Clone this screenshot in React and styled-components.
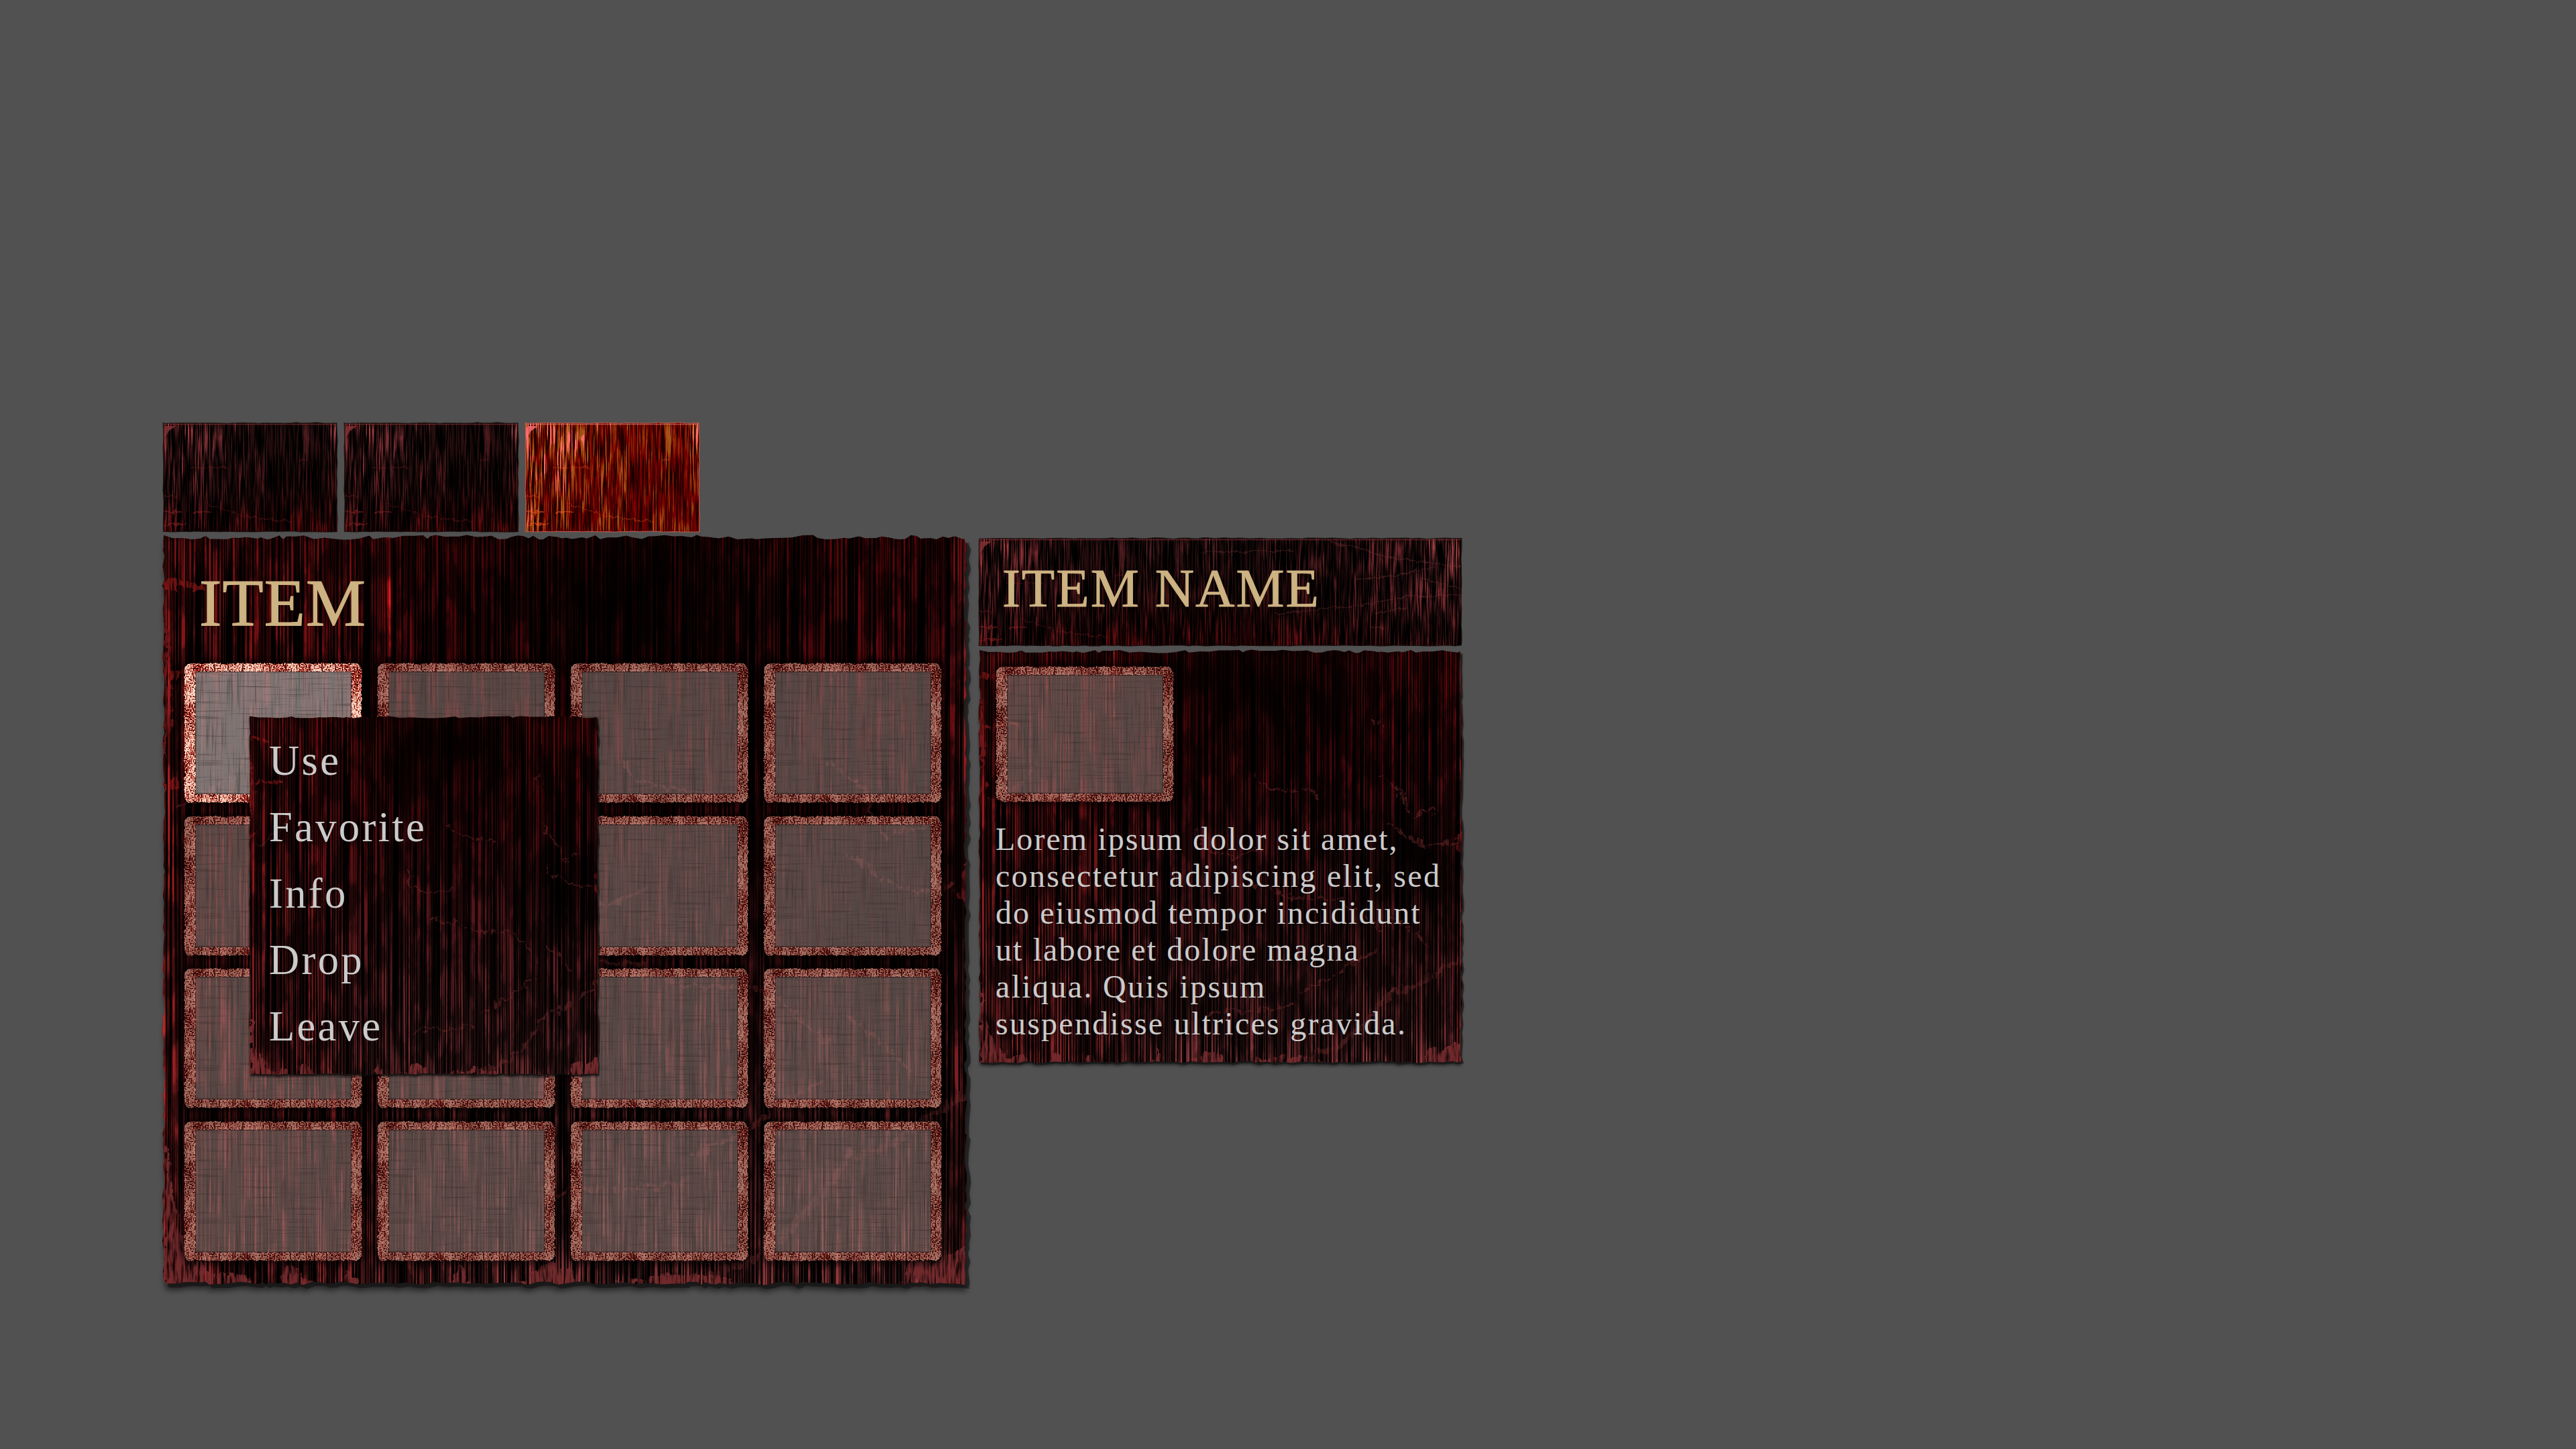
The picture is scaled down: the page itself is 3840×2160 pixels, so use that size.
import React from "react";
import styled, { createGlobalStyle } from "styled-components";

const serif = `"Liberation Serif", "Times New Roman", serif`;

const Global = createGlobalStyle`
  html, body { margin: 0; background: #515151; }
  body { font-family: ${serif}; overflow: hidden; }
  *, *::before, *::after { box-sizing: border-box; }
`;

/* ---------- texture helpers ---------- */

function random(seed) {
  let s = seed * 7919 + 13;
  return () => {
    s = (s * 16807) % 2147483647;
    return s / 2147483647;
  };
}

function raggedOutline(w, h, amp, seed) {
  const r = random(seed);
  const pts = [];
  const walk = (len, place) => {
    let p = 0;
    while (p < len) {
      pts.push(place(p, (r() - 0.5) * 2 * amp));
      p += 4 + r() * 13;
    }
  };
  walk(w, (p, o) => [p, o]);
  walk(h, (p, o) => [w + o * 0.7, p]);
  walk(w, (p, o) => [w - p, h + o * 0.7]);
  walk(h, (p, o) => [o * 0.6, h - p]);
  return "M" + pts.map(([x, y]) => `${x.toFixed(1)} ${y.toFixed(1)}`).join("L") + "Z";
}

const scaled = (points, w, h) =>
  "M" + points.map(([x, y]) => `${(x * w).toFixed(1)} ${(y * h).toFixed(1)}`).join("L");

const CRACKS = [
  [[0.57, 0.3], [0.59, 0.325], [0.65, 0.34], [0.7, 0.348]],
  [[0.81, 0.168], [0.835, 0.168], [0.835, 0.2]],
  [[0.83, 0.3], [0.87, 0.335], [0.89, 0.38], [0.9, 0.4], [0.95, 0.387]],
  [[0.45, 0.43], [0.46, 0.47], [0.5, 0.495], [0.53, 0.5], [0.6, 0.475]],
  [[0.52, 0.565], [0.6, 0.575], [0.65, 0.6], [0.75, 0.605], [0.79, 0.64], [0.83, 0.68]],
  [[0.85, 0.64], [0.9, 0.68], [0.93, 0.715]],
  [[0.66, 0.83], [0.72, 0.8], [0.78, 0.755], [0.82, 0.73]],
  [[0.47, 0.89], [0.51, 0.873], [0.57, 0.875], [0.65, 0.865]],
  [[0.85, 0.42], [0.9, 0.46], [0.94, 0.475], [1, 0.462]],
  [[0.02, 0.36], [0.09, 0.32], [0.12, 0.26]],
];

const FOLDS = [
  [[1, 0.745], [0.94, 0.79], [0.9, 0.82], [0.85, 0.83]],
  [[0.86, 0.82], [0.82, 0.88], [0.78, 0.93], [0.74, 0.965], [0.68, 0.99]],
  [[0, 0.067], [0.02, 0.06], [0.05, 0.068]],
  [[0, 0.187], [0.03, 0.18], [0.09, 0.181]],
  [[0, 0.34], [0.02, 0.325]],
];

const STAINS = [
  [[0, 0.8], [0.015, 0.9], [0.03, 0.955], [0.06, 0.985], [0.11, 0.99], [0.11, 1.01], [0, 1.01]],
  [[0.14, 1.01], [0.155, 0.975], [0.2, 1.01]],
  [[0.22, 1.01], [0.23, 0.98], [0.25, 1.01]],
  [[0.35, 1.01], [0.37, 0.97], [0.385, 1.01]],
  [[0.44, 1], [0.48, 0.972], [0.51, 0.985], [0.51, 1.01]],
  [[0.56, 1], [0.62, 0.988], [0.7, 0.99], [0.72, 1.01]],
  [[0.92, 1.01], [0.93, 0.965], [0.96, 0.975], [0.98, 0.96], [1.01, 0.95], [1.01, 1.01]],
  [[1.01, 0.42], [0.995, 0.45], [0.99, 0.48], [1.01, 0.5]],
  [[0, 0.1], [0.008, 0.16], [0.012, 0.24], [0, 0.3]],
];

const TextureSvg = styled.svg`
  position: absolute;
  inset: 0;
  width: 100%;
  height: 100%;
  overflow: visible;
  pointer-events: none;
`;

function StreakFilter({ id, w, h, fx, fy, seed, gain, children }) {
  return (
    <filter id={id} x={-10} y={-10} width={w + 20} height={h + 20}
      filterUnits="userSpaceOnUse" colorInterpolationFilters="sRGB">
      <feTurbulence type="fractalNoise" baseFrequency={`${fx} ${fy}`} numOctaves="2" seed={seed} result="n" />
      <feColorMatrix in="n" type="matrix"
        values="3.4 0 0 0 -1.4  3.4 0 0 0 -1.4  3.4 0 0 0 -1.4  0 0 0 0 1" result="streak" />
      <feTurbulence type="fractalNoise" baseFrequency="0.045 0.016" numOctaves="5" seed={seed + 5} />
      <feColorMatrix type="matrix"
        values="4.5 0 0 0 -1.9  4.5 0 0 0 -1.9  4.5 0 0 0 -1.9  0 0 0 0 1" result="patch" />
      <feComposite in="streak" in2="patch" operator="arithmetic" k1="0.7" k2="0.5" result="mix" />
      <feComposite in="SourceGraphic" in2="mix" operator="arithmetic" k1={gain} k2="0" result="toned" />
      <feColorMatrix in="toned" type="matrix" values="1 0 0 0 0  0 1 0 0 0  0 0 1 0 0  0 0 0 0 1" result="out" />
      {children}
    </filter>
  );
}

function PanelTexture({ id, w, h, amp, seed, fx, shadow }) {
  const outline = raggedOutline(w, h, amp, seed);
  return (
    <TextureSvg viewBox={`0 0 ${w} ${h}`} preserveAspectRatio="none" aria-hidden="true">
      <defs>
        <clipPath id={`${id}-clip`}><path d={outline} /></clipPath>
        <linearGradient id={`${id}-v`} x1="0" y1="0" x2="0" y2="1">
          <stop offset="0" stopColor="#520608" />
          <stop offset="0.3" stopColor="#3c070a" />
          <stop offset="0.6" stopColor="#481417" />
          <stop offset="0.9" stopColor="#582224" />
          <stop offset="1" stopColor="#762e30" />
        </linearGradient>
        <linearGradient id={`${id}-l`} x1="0" y1="0" x2="1" y2="0">
          <stop offset="0" stopColor="#a8201f" stopOpacity="0.9" />
          <stop offset="0.035" stopColor="#7c1618" stopOpacity="0.5" />
          <stop offset="0.22" stopColor="#781012" stopOpacity="0.4" />
          <stop offset="0.4" stopColor="#500808" stopOpacity="0" />
          <stop offset="0.96" stopColor="#500808" stopOpacity="0" />
          <stop offset="1" stopColor="#9e2426" stopOpacity="0.8" />
        </linearGradient>
        <radialGradient id={`${id}-d`}>
          <stop offset="0" stopColor="#000" stopOpacity="0.75" />
          <stop offset="1" stopColor="#000" stopOpacity="0" />
        </radialGradient>
        <StreakFilter id={`${id}-f`} w={w} h={h} fx={fx} fy={0.002} seed={seed} gain={1.3} />
        <filter id={`${id}-r`} x="-5%" y="-5%" width="110%" height="110%" colorInterpolationFilters="sRGB">
          <feTurbulence type="fractalNoise" baseFrequency="0.07" numOctaves="4" seed={seed} result="t" />
          <feDisplacementMap in="SourceGraphic" in2="t" scale="20" xChannelSelector="R" yChannelSelector="G" result="d" />
          <feTurbulence type="fractalNoise" baseFrequency="0.2 0.03" numOctaves="3" seed={seed + 2} />
          <feColorMatrix type="matrix" values="0 0 0 0 0  0 0 0 0 0  0 0 0 0 0  4 0 0 0 -1.3" />
          <feComposite in="d" operator="in" />
        </filter>
        <filter id={`${id}-s`} x="-5%" y="-5%" width="110%" height="110%">
          <feGaussianBlur stdDeviation={shadow * 0.4} />
        </filter>
      </defs>
      <path d={outline} fill="#000" opacity="0.55" filter={`url(#${id}-s)`}
        transform={`translate(${shadow * 0.2} ${shadow})`} />
      <path d={outline} fill="#111" opacity="0.6"
        transform={`translate(${shadow * 0.6} ${shadow * 0.6})`} />
      <g clipPath={`url(#${id}-clip)`}>
        <g filter={`url(#${id}-f)`}>
          <rect x="-10" y="-10" width={w + 20} height={h + 20} fill={`url(#${id}-v)`} />
          <rect x="-10" y="-10" width={w + 20} height={h + 20} fill={`url(#${id}-l)`} />
          <ellipse cx={w * 0.58} cy={h * 0.08} rx={w * 0.3} ry={h * 0.22} fill={`url(#${id}-d)`} />
          <ellipse cx={w * 0.9} cy={h * 0.5} rx={w * 0.2} ry={h * 0.18} fill={`url(#${id}-d)`} />
          <rect x={w * 0.276} y="0" width={w * 0.008} height={h * 0.16} fill="#b81616" />
        </g>
        <g filter={`url(#${id}-r)`}>
          {CRACKS.map((c, i) => (
            <path key={i} d={scaled(c, w, h)} fill="none" stroke="#7a2c2b" strokeOpacity="0.5" strokeWidth={w * 0.005} />
          ))}
          {FOLDS.map((c, i) => (
            <path key={i} d={scaled(c, w, h)} fill="none" stroke={i < 2 ? "#6a2a2a" : "#a01a1a"}
              strokeOpacity={i < 2 ? 0.5 : 0.6} strokeWidth={w * 0.01} />
          ))}
          {STAINS.map((c, i) => (
            <path key={i} d={scaled(c, w, h) + "Z"} fill={i < 7 ? "#742b2d" : "#801a1c"} fillOpacity={i < 7 ? 0.95 : 0.7} />
          ))}
        </g>
      </g>
    </TextureSvg>
  );
}

function BannerTexture({ id, w, h, full, hot }) {
  const outline = raggedOutline(w, h, 0.9, 31);
  return (
    <TextureSvg viewBox={`0 0 ${w} ${h}`} preserveAspectRatio="none" aria-hidden="true">
      <defs>
        <clipPath id={`${id}-clip`}><path d={outline} /></clipPath>
        <radialGradient id={`${id}-c`} gradientUnits="userSpaceOnUse" cx="0" cy="0" r={full ? 260 : 215}>
          <stop offset="0" stopColor="#a04244" />
          <stop offset="0.3" stopColor="#5e2427" />
          <stop offset="1" stopColor="#401214" stopOpacity="0" />
        </radialGradient>
        <radialGradient id={`${id}-k`} gradientUnits="userSpaceOnUse" cx={w} cy="10" r={full ? 330 : 60}>
          <stop offset="0" stopColor="#903c3e" />
          <stop offset="0.25" stopColor="#541e21" />
          <stop offset="1" stopColor="#401214" stopOpacity="0" />
        </radialGradient>
        <linearGradient id={`${id}-b`} x1="0" y1="0" x2="0" y2="1">
          <stop offset="0" stopColor="#9a3a3c" />
          <stop offset="0.04" stopColor="#3c181a" />
          <stop offset="0.6" stopColor={hot ? "#1e0c0d" : "#2e0c0d"} />
          <stop offset="1" stopColor={hot ? "#2e0708" : "#560708"} />
        </linearGradient>
        <linearGradient id={`${id}-l`} x1="0" y1="0" x2="1" y2="0">
          <stop offset="0" stopColor="#a02a2b" stopOpacity="0.9" />
          <stop offset={full ? 0.02 : 0.045} stopColor="#601014" stopOpacity="0.3" />
          <stop offset="0.3" stopColor="#400808" stopOpacity="0" />
          <stop offset="0.97" stopColor="#400808" stopOpacity="0" />
          <stop offset="1" stopColor="#9a2c2d" stopOpacity="0.8" />
        </linearGradient>
        <StreakFilter id={`${id}-f`} w={w} h={h} fx={0.47} fy={0.018} seed={8} gain={1.4}>
          {hot && (
            <>
              <feColorMatrix in="out" type="matrix"
                values="2.5 0 0 0 0.04  2.5 0 0 0 0.04  2.5 0 0 0 0.04  0 0 0 0 1" />
              <feComponentTransfer>
                <feFuncR type="table" tableValues="0.02 0.4 0.46 0.56 0.62 0.64 0.68 1" />
                <feFuncG type="table" tableValues="0 0 0.01 0.16 0.3 0.32 0.34 0.42" />
                <feFuncB type="table" tableValues="0 0 0 0.02 0.07 0.08 0.12 0.42" />
              </feComponentTransfer>
            </>
          )}
        </StreakFilter>
        <filter id={`${id}-r`} x="-5%" y="-30%" width="110%" height="160%">
          <feTurbulence type="fractalNoise" baseFrequency="0.12" numOctaves="3" seed="4" result="t" />
          <feDisplacementMap in="SourceGraphic" in2="t" scale="9" xChannelSelector="R" yChannelSelector="G" />
        </filter>
      </defs>
      <path d={outline} fill="none" stroke={hot ? "#c25a50" : "#1c1516"} strokeWidth="2" />
      <g clipPath={`url(#${id}-clip)`}>
        <g filter={`url(#${id}-f)`}>
          <rect x="-10" y="-10" width={w + 20} height={h + 20} fill={`url(#${id}-b)`} />
          <rect x="-10" y="-10" width={w + 20} height={h + 20} fill={`url(#${id}-c)`} />
          <rect x="-10" y="-10" width={w + 20} height={h + 20} fill={`url(#${id}-k)`} />
          <rect x="-10" y="-10" width={w + 20} height={h + 20} fill={`url(#${id}-l)`} />
        </g>
        <g filter={`url(#${id}-r)`} fill="none" stroke={hot ? "#e8501c" : "#7c2022"} strokeOpacity="0.6">
          <path d="M0 132H26M44 132H72M0 150H34" strokeWidth="2" />
          <path d="M40 66H96M200 54H216M60 120L130 140L190 146M0 108L20 110" strokeWidth="1.3" strokeOpacity="0.4" />
          {full && (
            <path stroke="#7e3a3a" strokeWidth="1.6" strokeOpacity="0.4"
              d="M520 5L570 15L610 28L718 42M560 62L620 54L680 42M440 112L560 100L640 86L718 84M590 112L640 102M660 60L718 74M330 20L470 18M580 132H604" />
          )}
        </g>
        <path d="M2 4H18L7 12L2 22Z" fill={hot ? "#ff6f74" : "#8a3436"} opacity="0.8" />
        <path d={`M0 1.5H${w}`} stroke={hot ? "#f08070" : "#8a3436"} strokeWidth="1.5" opacity="0.6" />
      </g>
    </TextureSvg>
  );
}

function SlotTexture({ w, h, active }) {
  const id = `slot-${w}-${h}-${active ? "on" : "off"}`;
  const ring =
    `M12 1H${w - 12}Q${w - 1} 1 ${w - 1} 12V${h - 12}Q${w - 1} ${h - 1} ${w - 12} ${h - 1}H12Q1 ${h - 1} 1 ${h - 12}V12Q1 1 12 1Z` +
    `M17 13V${h - 13}H${w - 16}V13Z`;
  return (
    <TextureSvg viewBox={`0 0 ${w} ${h}`} aria-hidden="true">
      <defs>
        <filter id={`${id}-f`} x="0" y="0" width={w} height={h} filterUnits="userSpaceOnUse" colorInterpolationFilters="sRGB">
          <feTurbulence type="fractalNoise" baseFrequency="0.5" numOctaves="2" seed="3" />
          <feColorMatrix type="matrix" values="1 0 0 0 0  1 0 0 0 0  1 0 0 0 0  0 0 0 0 1" result="fine" />
          <feTurbulence type="fractalNoise" baseFrequency="0.06 0.035" numOctaves="2" seed="11" />
          <feColorMatrix type="matrix" values="1 0 0 0 0  1 0 0 0 0  1 0 0 0 0  0 0 0 0 1" result="big" />
          <feComposite in="fine" in2="big" operator="arithmetic" k2="0.85" k3="0.35" k4="-0.1" />
          <feColorMatrix type="matrix" values="2.8 0 0 0 -0.88  2.8 0 0 0 -0.88  2.8 0 0 0 -0.88  0 0 0 0 1" />
          <feComponentTransfer result="col">
            <feFuncR type="table" tableValues={active ? "0.1 0.55 0.74 0.9 0.98 1" : "0.1 0.4 0.58 0.76 0.84 0.9"} />
            <feFuncG type="table" tableValues={active ? "0 0.03 0.3 0.66 0.84 0.9" : "0 0.05 0.25 0.47 0.58 0.64"} />
            <feFuncB type="table" tableValues={active ? "0 0.02 0.24 0.57 0.77 0.83" : "0 0.04 0.21 0.41 0.52 0.57"} />
          </feComponentTransfer>
          <feTurbulence type="fractalNoise" baseFrequency="0.3" numOctaves="2" seed="9" result="t" />
          <feDisplacementMap in="SourceGraphic" in2="t" scale="4" xChannelSelector="R" yChannelSelector="G" result="shape" />
          <feComposite in="col" in2="shape" operator="in" />
        </filter>
        <filter id={`${id}-w`} x="16" y="12" width={w - 32} height={h - 24} filterUnits="userSpaceOnUse" colorInterpolationFilters="sRGB">
          <feTurbulence type="fractalNoise" baseFrequency="0.45 0.014" numOctaves="2" seed="21" />
          <feColorMatrix type="matrix" values="0 0 0 0 0.08  0 0 0 0 0.07  0 0 0 0 0.07  2.8 0 0 0 -1.5" result="v" />
          <feTurbulence type="fractalNoise" baseFrequency="0.014 0.45" numOctaves="2" seed="22" />
          <feColorMatrix type="matrix" values="0 0 0 0 0.08  0 0 0 0 0.07  0 0 0 0 0.07  3.2 0 0 0 -1.85" result="h" />
          <feMerge><feMergeNode in="v" /><feMergeNode in="h" /></feMerge>
        </filter>
        <filter id={`${id}-g`} x="-10%" y="-10%" width="120%" height="120%"><feGaussianBlur stdDeviation="4" /></filter>
      </defs>
      <rect x="0" y="0" width={w} height={h} rx="14" fill="none" stroke="#000" strokeWidth="10" opacity="0.6" filter={`url(#${id}-g)`} />
      <rect x="15" y="11" width={w - 30} height={h - 22} fill={active ? "#b0a5a3" : "#987e7a"} opacity={active ? 0.7 : 0.56} />
      <rect x="16" y="12" width={w - 32} height={h - 24} filter={`url(#${id}-w)`} opacity={active ? 0.42 : 0.32} />
      <rect x="17" y="13" width={w - 33} height={h - 26} fill="none" stroke="#1c0d0c" strokeWidth="2.5" opacity="0.55" />
      <g opacity={active ? 1 : 0.74}>
        <path d={ring} fillRule="evenodd" fill="#fff" filter={`url(#${id}-f)`} />
        {[46, 66, 88, 128, 152, 188, 206, 226].map((x) => (
          <path key={x} d={`M${x} 2V12M${x + 7} ${h - 12}V${h - 2}`} stroke="#4a0604" strokeWidth="2" opacity="0.75" />
        ))}
        <path d={`M10 36V84M11 120V176M${w - 8} 34V90M${w - 9} 110V${h - 50}`} stroke={active ? "#a02018" : "#5a0a08"} strokeWidth="2" strokeDasharray="9 4 3 6" opacity="0.7" />
      </g>
    </TextureSvg>
  );
}

/* ---------- layout ---------- */

const Screen = styled.main`
  width: 3840px;
  height: 2160px;
  padding: 631px 0 0 244px;
  display: flex;
  align-items: flex-start;
  gap: 21px;
  background: #515151;
`;

const Inventory = styled.section`
  width: 1195px;
  display: flex;
  flex-direction: column;
  gap: 9px;
`;

const Tabs = styled.nav`
  display: flex;
  gap: 12px;
`;

const Tab = styled.button`
  position: relative;
  width: 258px;
  height: 161px;
  padding: 0;
  border: 0;
  background: none;
`;

const ItemPanel = styled.div`
  position: relative;
  height: 1112px;
  padding: 48px 29px 0 30px;
`;

const Title = styled.h1`
  position: relative;
  margin: 0 0 39px;
  padding-left: 23px;
  font-size: 100px;
  line-height: 100px;
  font-weight: 400;
  letter-spacing: 1.2px;
  color: #cdb382;
  -webkit-text-stroke: 1.2px #cdb382;
`;

const SlotGrid = styled.div`
  display: grid;
  grid-template-columns: repeat(4, 266px);
  grid-auto-rows: 209px;
  gap: 18.67px 22px;
`;

const Slot = styled.div`
  position: relative;
  width: 266px;
  height: ${(p) => p.$height || 209}px;
`;

const ContextMenu = styled.ul`
  position: absolute;
  left: 127.5px;
  top: 268px;
  width: 519px;
  height: 532px;
  margin: 0;
  padding: 16px 29.5px;
  list-style: none;
`;

const MenuItem = styled.li`
  position: relative;
  font-size: 62.6px;
  line-height: 99px;
  letter-spacing: 3.3px;
  color: #cbcbcb;
`;

const Details = styled.aside`
  width: 718px;
  margin-top: 172px;
  display: flex;
  flex-direction: column;
  gap: 9px;
`;

const NameBanner = styled.header`
  position: relative;
  height: 159px;
  padding: 34px 34px;
`;

const ItemName = styled.h2`
  position: relative;
  margin: 0;
  font-size: 81px;
  line-height: 81px;
  font-weight: 400;
  letter-spacing: 1.9px;
  white-space: nowrap;
  color: #cdb382;
  -webkit-text-stroke: 0.8px #cdb382;
`;

const DetailsBody = styled.div`
  position: relative;
  height: 612px;
  padding: 22px 24px 0;
`;

const Description = styled.p`
  position: relative;
  margin: 27px 0 0;
  font-size: 48px;
  line-height: 55px;
  white-space: nowrap;
  color: #cbcbcb;
`;

const Line = styled.span`
  display: block;
  letter-spacing: ${(p) => p.$track}px;
`;

const actions = ["Use", "Favorite", "Info", "Drop", "Leave"];
const lines = [
  ["Lorem ipsum dolor sit amet,", 2.05],
  ["consectetur adipiscing elit, sed", 2.35],
  ["do eiusmod tempor incididunt", 2.05],
  ["ut labore et dolore magna", 2.1],
  ["aliqua. Quis ipsum", 2.35],
  ["suspendisse ultrices gravida.", 2.25],
];

export default function App() {
  return (
    <>
      <Global />
      <Screen>
        <Inventory>
          <Tabs>
            {[0, 1, 2].map((i) => (
              <Tab key={i} type="button">
                <BannerTexture id={`tab${i}`} w={258} h={161} hot={i === 2} />
              </Tab>
            ))}
          </Tabs>
          <ItemPanel>
            <PanelTexture id="main" w={1195} h={1112} amp={3.6} seed={17} fx={0.31} shadow={10} />
            <Title>ITEM</Title>
            <SlotGrid>
              {Array.from({ length: 16 }, (_, i) => (
                <Slot key={i}>
                  <SlotTexture w={266} h={209} active={i === 0} />
                </Slot>
              ))}
            </SlotGrid>
            <ContextMenu>
              <PanelTexture id="menu" w={519} h={532} amp={1.6} seed={17} fx={0.43} shadow={4} />
              {actions.map((a) => (
                <MenuItem key={a}>{a}</MenuItem>
              ))}
            </ContextMenu>
          </ItemPanel>
        </Inventory>
        <Details>
          <NameBanner>
            <BannerTexture id="banner" w={718} h={159} full />
            <ItemName>ITEM NAME</ItemName>
          </NameBanner>
          <DetailsBody>
            <PanelTexture id="body" w={718} h={612} amp={2.4} seed={17} fx={0.43} shadow={5} />
            <Slot $height={203}>
              <SlotTexture w={266} h={203} />
            </Slot>
            <Description>
              {lines.map(([text, track]) => (
                <Line key={text} $track={track}>{text}</Line>
              ))}
            </Description>
          </DetailsBody>
        </Details>
      </Screen>
    </>
  );
}
